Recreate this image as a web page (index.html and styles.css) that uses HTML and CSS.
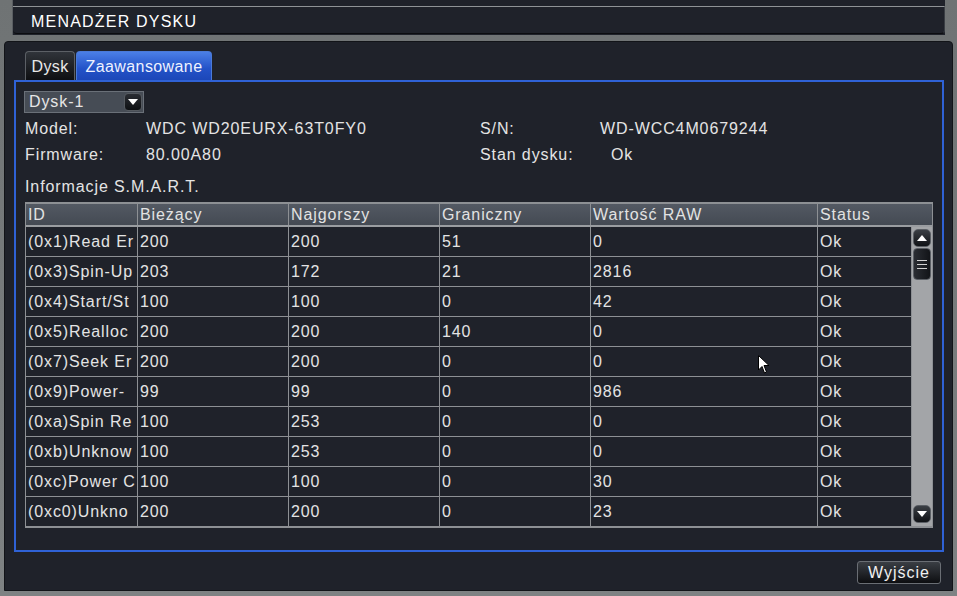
FILE: index.html
```html
<!DOCTYPE html>
<html>
<head>
<meta charset="utf-8">
<link rel="stylesheet" href="styles.css">
</head>
<body>
<div class="top">
  <div class="title">MENADŻER DYSKU</div>
</div>
<div class="main">
  <div class="tabs">
    <div class="tab tab-disk">Dysk</div>
    <div class="tab active">Zaawansowane</div>
  </div>
  <div class="frame">
    <div class="select">
      <span>Dysk-1</span>
      <span class="sel-btn"><svg width="12" height="8" viewBox="0 0 12 8"><polygon points="1,1 11,1 6,7" fill="#fff"/></svg></span>
    </div>
    <div class="info">
      <div class="info-row"><span class="lbl">Model:</span><span class="val">WDC WD20EURX-63T0FY0</span><span class="lbl2">S/N:</span><span class="val2">WD-WCC4M0679244</span></div>
      <div class="info-row"><span class="lbl">Firmware:</span><span class="val">80.00A80</span><span class="lbl2">Stan dysku:</span><span class="val3">Ok</span></div>
    </div>
    <div class="smart">Informacje S.M.A.R.T.</div>
    <div class="table">
      <div class="thead">
        <div class="c c1">ID</div><div class="c c2">Bieżący</div><div class="c c3">Najgorszy</div><div class="c c4">Graniczny</div><div class="c c5">Wartość RAW</div><div class="c c6h">Status</div>
      </div>
      <div class="tbody">
        <div class="rows">
          <div class="row"><div class="c c1">(0x1)Read Er</div><div class="c c2">200</div><div class="c c3">200</div><div class="c c4">51</div><div class="c c5">0</div><div class="c c6">Ok</div></div>
          <div class="row"><div class="c c1">(0x3)Spin-Up</div><div class="c c2">203</div><div class="c c3">172</div><div class="c c4">21</div><div class="c c5">2816</div><div class="c c6">Ok</div></div>
          <div class="row"><div class="c c1">(0x4)Start/St</div><div class="c c2">100</div><div class="c c3">100</div><div class="c c4">0</div><div class="c c5">42</div><div class="c c6">Ok</div></div>
          <div class="row"><div class="c c1">(0x5)Realloc</div><div class="c c2">200</div><div class="c c3">200</div><div class="c c4">140</div><div class="c c5">0</div><div class="c c6">Ok</div></div>
          <div class="row"><div class="c c1">(0x7)Seek Er</div><div class="c c2">200</div><div class="c c3">200</div><div class="c c4">0</div><div class="c c5">0</div><div class="c c6">Ok</div></div>
          <div class="row"><div class="c c1">(0x9)Power-</div><div class="c c2">99</div><div class="c c3">99</div><div class="c c4">0</div><div class="c c5">986</div><div class="c c6">Ok</div></div>
          <div class="row"><div class="c c1">(0xa)Spin Re</div><div class="c c2">100</div><div class="c c3">253</div><div class="c c4">0</div><div class="c c5">0</div><div class="c c6">Ok</div></div>
          <div class="row"><div class="c c1">(0xb)Unknow</div><div class="c c2">100</div><div class="c c3">253</div><div class="c c4">0</div><div class="c c5">0</div><div class="c c6">Ok</div></div>
          <div class="row"><div class="c c1">(0xc)Power C</div><div class="c c2">100</div><div class="c c3">100</div><div class="c c4">0</div><div class="c c5">30</div><div class="c c6">Ok</div></div>
          <div class="row"><div class="c c1">(0xc0)Unkno</div><div class="c c2">200</div><div class="c c3">200</div><div class="c c4">0</div><div class="c c5">23</div><div class="c c6">Ok</div></div>
        </div>
        <div class="scroll">
          <div class="sb-btn"><svg width="12" height="8" viewBox="0 0 12 8"><polygon points="1,7 11,7 6,1" fill="#fff"/></svg></div>
          <div class="sb-thumb"><i></i><i></i><i></i></div>
          <div class="sb-space"></div>
          <div class="sb-btn"><svg width="12" height="8" viewBox="0 0 12 8"><polygon points="1,1 11,1 6,7" fill="#fff"/></svg></div>
        </div>
      </div>
    </div>
  </div>
  <div class="footer">
    <div class="btn">Wyjście</div>
  </div>
  <svg class="cursor" width="12" height="20" viewBox="0 0 12 20"><polygon points="0.5,0.5 0.5,15 4,11.5 6.5,18 8.5,17 6,10.5 11,10.5" fill="#fff" stroke="#000" stroke-width="1"/></svg>
</div>
</body>
</html>
```
FILE: styles.css
```css
html, body {
  margin: 0;
  padding: 0;
}
body {
  width: 957px;
  height: 596px;
  overflow: hidden;
  background: linear-gradient(#6f7374, #7e8283);
  font-family: "Liberation Sans", Arial, sans-serif;
  font-size: 16px;
  letter-spacing: 0.9px;
  color: #e4e4e4;
}
.top {
  margin-left: 12px;
  width: 933px;
  height: 35px;
  background: #1f222a;
  padding-top: 6px;
  box-sizing: border-box;
  border-left: 1px solid #5a5e62;
}
.title {
  height: 28px;
  box-sizing: border-box;
  border-top: 1px solid #8f9396;
  border-bottom: 1px solid #0c0d10;
  border-right: 1px solid #3a3e44;
  border-radius: 0 0 4px 4px;
  padding: 1px 0 0 18px;
  line-height: 27px;
  color: #ffffff;
  letter-spacing: 1.2px;
}
.main {
  position: relative;
  margin: 6px 0 0 4px;
  width: 949px;
  height: 550px;
  box-sizing: border-box;
  background: #1f222a;
  border: 1px solid #121418;
  border-radius: 4px 4px 0 0;
  padding: 9px 0 0 9px;
}
.tabs {
  display: flex;
  margin-left: 11px;
  gap: 1px;
  height: 29px;
}
.tab {
  height: 29px;
  box-sizing: border-box;
  line-height: 29px;
  letter-spacing: 0.4px;
  text-align: center;
  border: 1px solid #5c6066;
  border-bottom: none;
  border-radius: 4px 4px 0 0;
  background: linear-gradient(#30343a, #0e0f12);
  color: #e8e8e8;
}
.tab-disk {
  width: 50px;
}
.tab.active {
  width: 136px;
  background: linear-gradient(#4b7fe6, #2352c8 60%, #1c47b8);
  border-color: #4a7ad8;
  color: #eef2ff;
}
.frame {
  width: 930px;
  height: 472px;
  box-sizing: border-box;
  border: 2px solid #2f62d6;
  padding: 9px 9px 0 9px;
}
.select {
  margin-left: -1px;
  width: 120px;
  height: 22px;
  box-sizing: border-box;
  background: #464c55;
  border: 1px solid #6a7078;
  display: flex;
  align-items: center;
  justify-content: space-between;
  padding: 0 1px 0 4px;
  color: #e6e6e6;
}
.sel-btn {
  width: 18px;
  height: 18px;
  box-sizing: border-box;
  border-radius: 4px;
  background: linear-gradient(#2a2d33, #0e1013);
  border: 1px solid #555a60;
  display: flex;
  align-items: center;
  justify-content: center;
}
.info {
  margin-top: 3px;
}
.info-row {
  display: flex;
  height: 26px;
  line-height: 26px;
}
.lbl {
  width: 121px;
}
.val {
  width: 334px;
}
.lbl2 {
  width: 120px;
}
.lbl2 + .val3 {
  margin-left: 11px;
}
.smart {
  margin-top: 8px;
  height: 22px;
  line-height: 22px;
}
.table {
  margin-top: 4px;
  width: 908px;
  border: 1px solid #8d9094;
  border-width: 2px 1px 2px 1px;
  box-sizing: border-box;
}
.thead {
  display: flex;
  height: 23px;
  background: linear-gradient(#535963, #444a53);
  border-bottom: 2px solid #9a9da1;
  box-sizing: border-box;
}
.thead .c {
  line-height: 22px;
  color: #e2e2e2;
}
.c {
  flex-shrink: 0;
  box-sizing: border-box;
  padding-left: 2px;
  border-right: 1px solid #8d9094;
  white-space: nowrap;
  overflow: hidden;
}
.c1 { width: 112px; }
.c2 { width: 151px; }
.c3 { width: 151px; }
.c4 { width: 151px; }
.c5 { width: 227px; }
.c6 { width: 94px; }
.c6h { width: 114px; border-right: none; }
.tbody {
  display: flex;
}
.rows {
  width: 886px;
}
.row {
  display: flex;
  height: 30px;
  border-bottom: 1px solid #8d9094;
  box-sizing: border-box;
}
.row:last-child {
  border-bottom: none;
  height: 29px;
}
.row .c {
  line-height: 29px;
}
.scroll {
  width: 20px;
  background: #a3a5a8;
  display: flex;
  flex-direction: column;
  align-items: center;
  padding: 2px 0 3px;
  box-sizing: border-box;
}
.sb-btn {
  width: 18px;
  height: 18px;
  box-sizing: border-box;
  border-radius: 5px;
  background: linear-gradient(#3a3e44, #101216);
  border: 1px solid #5a5e64;
  display: flex;
  align-items: center;
  justify-content: center;
}
.sb-thumb {
  margin-top: 1px;
  width: 18px;
  height: 32px;
  box-sizing: border-box;
  border-radius: 4px;
  background: linear-gradient(90deg, #2a2d33, #121418);
  border: 1px solid #5a5e64;
  display: flex;
  flex-direction: column;
  align-items: center;
  justify-content: center;
  gap: 3px;
}
.sb-thumb i {
  display: block;
  width: 10px;
  height: 1px;
  background: #d0d0d0;
}
.sb-space {
  flex: 1;
}
.footer {
  display: flex;
  justify-content: flex-end;
  padding: 9px 3px 0 0;
  width: 930px;
  box-sizing: border-box;
}
.btn {
  width: 84px;
  height: 23px;
  box-sizing: border-box;
  border: 1px solid #6a6e74;
  border-radius: 3px;
  background: linear-gradient(#3a3e44, #0d0e11);
  text-align: center;
  line-height: 21px;
  color: #f0f0f0;
  letter-spacing: 1px;
}
.cursor {
  position: absolute;
  left: 753px;
  top: 313px;
}
```
